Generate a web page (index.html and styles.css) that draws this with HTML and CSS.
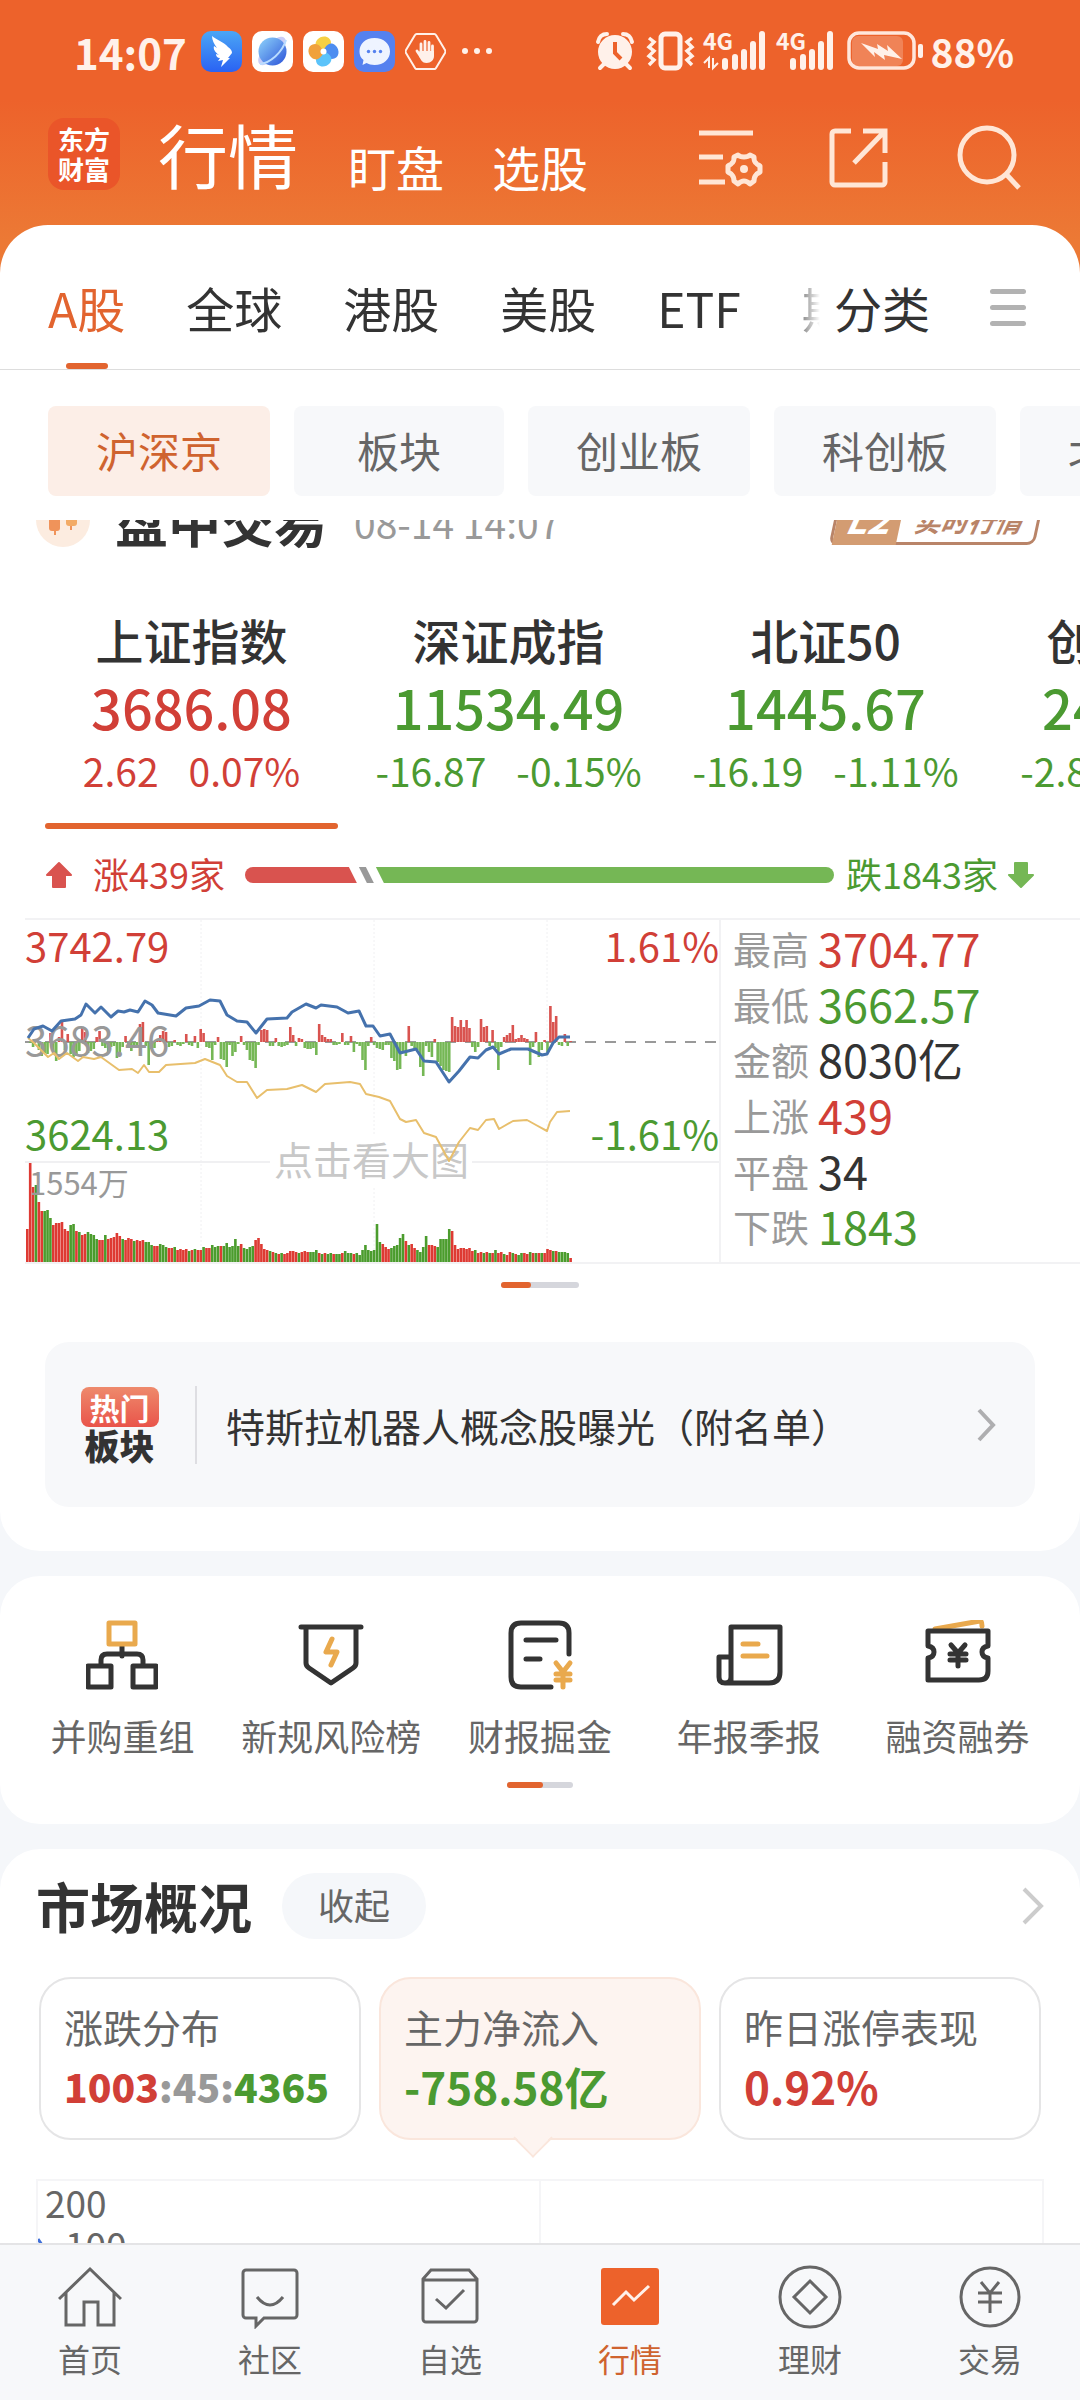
FILE: index.html
```html
<!DOCTYPE html>
<html lang="zh-CN">
<head>
    <meta charset="UTF-8">
    <meta name="viewport" content="width=device-width, initial-scale=1.0">
    <title>行情</title>
    <link rel="stylesheet" href="styles.css">
</head>
<body>
    <div class="app">
        <header class="header">
            <div class="status">
                <span class="time">14:07</span>
                <svg class="app-icon" viewBox="0 0 41 41">
                    <defs><linearGradient id="wing" x1="0" y1="0" x2="0" y2="1"><stop offset="0" stop-color="#4ba6f5"/><stop offset="1" stop-color="#2a62f3"/></linearGradient></defs>
                    <rect width="41" height="41" rx="10" fill="url(#wing)"/>
                    <path d="M11 5c5 4 12 6 16 11 3 2 4 4 4 6l-4 5h2l-9 9 2-7-5 1 2-3c-3 0-4-2-4-4l3 1c-4-3-6-6-5-9l3 2c-3-4-5-8-5-12z" fill="#fff"/>
                </svg>
                <svg class="app-icon" viewBox="0 0 41 41">
                    <defs><linearGradient id="planet" x1="0" y1="0" x2="1" y2="1"><stop offset="0" stop-color="#8fd4fb"/><stop offset="1" stop-color="#2b52d8"/></linearGradient></defs>
                    <rect width="41" height="41" rx="10" fill="#fff"/>
                    <ellipse cx="20" cy="20" rx="18" ry="8" transform="rotate(-46 20 20)" fill="#c9cdf7"/>
                    <circle cx="20.500" cy="20.500" r="14" fill="url(#planet)"/>
                    <path d="M8 33C18 32 30 22 34 9" fill="none" stroke="#b9dcff" stroke-width="2"/>
                </svg>
                <svg class="app-icon" viewBox="0 0 41 41">
                    <rect width="41" height="41" rx="10" fill="#fff"/>
                    <path d="M14 9c5-6 14-4 14 3 0 5-4 6-8 9-5-3-10-6-6-12z" fill="#f6d043"/>
                    <path d="M32 14c6 5 4 14-3 14-5 0-6-4-9-8 3-5 6-10 12-6z" fill="#4d8df0"/>
                    <path d="M27 32c-5 6-14 4-14-3 0-5 4-6 8-9 5 3 10 6 6 12z" fill="#5bc3fa"/>
                    <path d="M9 27c-6-5-4-14 3-14 5 0 6 4 9 8-3 5-6 10-12 6z" fill="#f0a13c"/>
                    <circle cx="20.500" cy="20.500" r="3" fill="#fff"/>
                </svg>
                <svg class="app-icon" viewBox="0 0 41 41">
                    <rect width="41" height="41" rx="10" fill="#5581ef"/>
                    <path d="M20.500 7C30 7 36 13 36 20.500S30 34 20.500 34c-3 0-6-1-8-2l-4 2 1-5c-3-2-4-5-4-8.500C5.500 13 11 7 20.500 7z" fill="#eef4ff"/>
                    <g fill="#5581ef"><circle cx="14.500" cy="20.500" r="1.700"/><circle cx="20.500" cy="20.500" r="1.700"/><circle cx="26.500" cy="20.500" r="1.700"/></g>
                </svg>
                <svg class="app-icon" viewBox="0 0 41 41">
                    <path d="M12 3h17a2 2 0 0 1 2 1l9 15a3 3 0 0 1 0 3l-9 15a2 2 0 0 1-2 1H12a2 2 0 0 1-2-1L1 22a3 3 0 0 1 0-3L10 4a2 2 0 0 1 2-1z" fill="none" stroke="#fff1ea" stroke-width="2"/>
                    <path d="M16 22V13M20 20V10.500M24 20V11.500M27.500 22V15M12 20l4 6" stroke="#fff1ea" stroke-width="2.800" stroke-linecap="round"/>
                    <path d="M14.500 20H29v5c0 4-3 7-7.500 7S16 29 14 25z" fill="#fff1ea"/>
                </svg>
                <svg class="dots" viewBox="0 0 30 8"><circle cx="3" cy="4" r="3"/><circle cx="15" cy="4" r="3"/><circle cx="27" cy="4" r="3"/></svg>

                <svg class="status-right" width="330" height="42" viewBox="0 0 330 42" fill="#fff1ea">
                    <!-- alarm -->
                    <circle cx="19" cy="22" r="17"/>
                    <path d="M2 12C3 7 6 4 11 4M36 12C35 7 32 4 27 4M8 34l-4 4M30 34l4 4" fill="none" stroke="#fff1ea" stroke-width="4" stroke-linecap="round"/>
                    <path d="M19 12v11l6 6" fill="none" stroke="#ed622b" stroke-width="4"/>
                    <!-- vibrate -->
                    <rect x="65" y="4" width="19" height="34" rx="4" fill="none" stroke="#fff1ea" stroke-width="5"/>
                    <path d="M53 8l5 4-5 5 5 4-5 5 5 4-5 5M96 8l-5 4 5 5-5 4 5 5-5 4 5 5" fill="none" stroke="#fff1ea" stroke-width="3.500"/>
                    <!-- signal -->
                    <text class="net" x="107" y="20">4G</text>
                    <path d="M108 33l5-5v10M122 33l-5 5V28" fill="none" stroke="#fff1ea" stroke-width="2"/>
                    <g id="sig"><rect x="126" y="28" width="6" height="12" rx="3"/><rect x="136" y="24" width="6" height="16" rx="3"/><rect x="145" y="19" width="6" height="21" rx="3"/><rect x="154" y="11" width="6" height="29" rx="3"/><rect x="163" y="1" width="6" height="39" rx="3"/></g>
                    <text class="net" x="180" y="20">4G</text>
                    <use href="#sig" x="68"/>
                    <!-- battery -->
                    <rect x="256" y="6" width="51" height="30" rx="6" fill="#f08357"/>
                    <rect x="253" y="3" width="65" height="35" rx="10" fill="none" stroke="#ffe7dc" stroke-width="3.500"/>
                    <rect x="322" y="14" width="5" height="14" rx="2"/>
                    <path d="M265 13l17 6-1-5 11 7-1-6 15 14-18-4 1 5-11-8 1 5z"/>
                </svg>
                <span class="percent">88%</span>
            </div>

            <div class="title-bar">
                <div class="logo"><span>东方</span><span>财富</span></div>
                <h1>行情</h1>
                <button class="head-tab">盯盘</button>
                <button class="head-tab">选股</button>
                <div class="tools">
                    <button class="tool" aria-label="设置">
                        <svg viewBox="0 0 64 64"><path d="M3 11h54M3 35h24M3 60h26"/><path d="M42 33c2 2 4 2 6 2s4 0 6-2l4 2c0 3 0 5 2 6 1 2 3 2 4 3v6c-1 1-3 1-4 3-2 2-2 4-2 6l-4 3c-2-2-4-3-6-3s-4 1-6 3l-4-3c0-2 0-4-2-6-1-2-3-2-4-3v-6c1-1 3-1 4-3 2-1 2-3 2-6z" stroke-linejoin="round"/><circle cx="48" cy="47" r="4" fill="#ffe6d6" stroke="none"/></svg>
                    </button>
                    <button class="tool" aria-label="分享">
                        <svg viewBox="0 0 64 64"><path d="M25 9H9a3 3 0 0 0-3 3v48a3 3 0 0 0 3 3h47a3 3 0 0 0 3-3V40M37 9h22v22M58 10L28 41"/></svg>
                    </button>
                    <button class="tool" aria-label="搜索">
                        <svg viewBox="0 0 64 64"><circle cx="31" cy="33" r="27"/><path d="M50 52l13 14"/></svg>
                    </button>
                </div>
            </div>
        </header>

        <div class="filters">
            <nav class="tabs">
                <div class="tab-list">
                    <button class="tab active">A股</button>
                    <button class="tab">全球</button>
                    <button class="tab">港股</button>
                    <button class="tab">美股</button>
                    <button class="tab">ETF</button>
                    <button class="tab">期货</button>
                </div>
                <button class="tab">分类</button>
                <button class="menu" aria-label="菜单"><i></i><i></i><i></i></button>
            </nav>
            <div class="chips">
                <button class="chip active">沪深京</button>
                <button class="chip">板块</button>
                <button class="chip">创业板</button>
                <button class="chip">科创板</button>
                <button class="chip">北交所</button>
            </div>
        </div>

        <main class="content">
            <section class="card quotes">
                <div class="session">
                    <svg class="session-icon" viewBox="0 0 54 54">
                        <circle cx="27" cy="27" r="27" fill="#fcece0"/>
                        <path d="M19 12v30M35 15v22" stroke="#f0935a" stroke-width="2"/>
                        <rect x="13" y="18" width="11" height="20" rx="3" fill="#f0935a"/><rect x="30" y="20" width="11" height="13" rx="3" fill="#f3ab66"/>
                    </svg>
                    <h2>盘中交易</h2>
                    <span class="date">08-14 14:07</span>
                    <span class="level"><b>L2</b><em>实时行情</em></span>
                </div>

                <div class="indexes">
                    <div class="index up active">
                        <h3>上证指数</h3>
                        <strong>3686.08</strong>
                        <p><span>2.62</span><span>0.07%</span></p>
                    </div>
                    <div class="index down">
                        <h3>深证成指</h3>
                        <strong>11534.49</strong>
                        <p><span>-16.87</span><span>-0.15%</span></p>
                    </div>
                    <div class="index down">
                        <h3>北证50</h3>
                        <strong>1445.67</strong>
                        <p><span>-16.19</span><span>-1.11%</span></p>
                    </div>
                    <div class="index down">
                        <h3>创业板指</h3>
                        <strong>2493.42</strong>
                        <p><span>-2.80</span><span>-0.11%</span></p>
                    </div>
                </div>

                <div class="breadth">
                    <svg class="arrow" viewBox="0 0 28 28"><path d="M14 2L26 14H20V26H8V14H2z" fill="#d9534f" stroke="#d9534f" stroke-width="2" stroke-linejoin="round"/></svg>
                    <span class="up">涨439家</span>
                    <div class="ratio">
                        <div class="ratio-up" style="width: 19%"></div>
                        <div class="ratio-flat"></div>
                        <div class="ratio-down"></div>
                    </div>
                    <span class="down">跌1843家</span>
                    <svg class="arrow" viewBox="0 0 28 28"><path d="M14 26L2 14H8V2H20V14H26z" fill="#75b755" stroke="#75b755" stroke-width="2" stroke-linejoin="round"/></svg>
                </div>

                <div class="market">
                    <svg class="chart" viewBox="0 0 694 342">
                        <g stroke="#f0f0f2" stroke-width="1">
                            <path d="M176 0v342M349 0v342M522 0v342" stroke-dasharray="2 2"/>
                            <path d="M0 242h694" stroke-width="2"/>
                        </g>
                        <path d="M0 122h694" stroke="#999" stroke-width="2" stroke-dasharray="11 9"/>
                        <rect x="245" y="215" width="202" height="52" fill="#fff"/>
                        <text class="hint" x="249" y="255">点击看大图</text>
                        <g id="flow"></g>
                        <g id="volume"></g>
                        <text class="axis red" x="0" y="42">3742.79</text>
                        <text class="axis gray" x="0" y="136">3683.46</text>
                        <text class="axis green" x="0" y="230">3624.13</text>
                        <text class="axis red" x="694" y="42" text-anchor="end">1.61%</text>
                        <text class="axis green" x="694" y="230" text-anchor="end">-1.61%</text>
                        <text class="vol gray" x="4" y="275">1554万</text>
                        <polyline fill="none" stroke="#e8bf6c" stroke-width="2" stroke-linejoin="round" points="3,118 9,123 18,132 23,137 29,133 34,139 42,133 53,141 58,137 69,139 76,137 94,150 107,149 113,153 119,145 124,152 134,152 141,145 170,143 180,139 195,145 202,156 212,162 222,162 232,178 242,170 262,169 277,165 291,172 300,164 325,162 335,164 341,174 354,177 365,181 375,199 381,202 391,200 399,213 411,217 424,241 434,222 445,208 453,210 461,200 469,199 474,209 488,201 502,200 511,205 522,211 525,202 532,192 545,191"/>
                        <polyline fill="none" stroke="#4572ad" stroke-width="3" stroke-linejoin="round" points="3,118 9,109 18,106 27,111 36,101 50,99 56,95 61,84 70,93 76,87 86,97 93,91 99,92 105,90 113,92 120,81 127,85 133,93 151,96 161,88 174,86 185,80 195,81 202,95 212,101 222,102 231,113 242,99 262,98 267,92 281,84 291,88 296,85 312,87 323,93 334,91 341,106 348,106 355,116 365,114 375,133 391,129 399,141 411,142 424,162 434,151 445,137 453,138 461,130 468,127 474,134 486,129 503,129 517,135 522,134 528,123 534,117 545,117"/>
                    </svg>
                    <dl class="stats">
                        <div><dt>最高</dt><dd class="up">3704.77</dd></div>
                        <div><dt>最低</dt><dd class="down">3662.57</dd></div>
                        <div><dt>金额</dt><dd>8030亿</dd></div>
                        <div><dt>上涨</dt><dd class="up">439</dd></div>
                        <div><dt>平盘</dt><dd>34</dd></div>
                        <div><dt>下跌</dt><dd class="down">1843</dd></div>
                    </dl>
                </div>
                <div class="pager wide"><i></i></div>

                <a class="hot" href="#">
                    <span class="hot-tag"><b>热门</b><strong>板块</strong></span>
                    <span class="hot-text">特斯拉机器人概念股曝光（附名单）</span>
                    <svg class="chevron" viewBox="0 0 22 38"><path d="M3 4l14 15L3 34" fill="none" stroke="#aeaeb0" stroke-width="4"/></svg>
                </a>
            </section>

            <section class="card shortcuts">
                <div class="shortcut-list">
                    <a class="shortcut" href="#">
                        <svg viewBox="0 0 72 72"><path d="M36 26v10M15 44v-4q0-6 6-6h30q6 0 6 6v4"/><rect x="2" y="46" width="23" height="21"/><rect x="47" y="46" width="23" height="21"/><rect class="gold" x="23" y="3" width="26" height="21"/></svg>
                        并购重组
                    </a>
                    <a class="shortcut" href="#">
                        <svg viewBox="0 0 72 72"><path d="M6 7h60M11 7v36q0 3 3 5l22 15 22-15q3-2 3-5V7"/><path class="gold" d="M37 19l-6 13h11l-6 13"/></svg>
                        新规风险榜
                    </a>
                    <a class="shortcut" href="#">
                        <svg viewBox="0 0 72 72"><path d="M65 34V13q0-10-10-10H17Q7 3 7 13v44q0 10 10 10h30M22 20h30M22 39h14"/><path class="gold" d="M52 43l7 9 7-9M59 52v15M52 54h14M52 60h14"/></svg>
                        财报掘金
                    </a>
                    <a class="shortcut" href="#">
                        <svg viewBox="0 0 72 72"><path d="M18 63V7h49v45q0 11-11 11H12q-6 0-6-6V37h12v20q0 6-6 6"/><path class="gold" d="M30 24h15M30 36h24"/></svg>
                        年报季报
                    </a>
                    <a class="shortcut" href="#">
                        <svg viewBox="0 0 72 72"><path class="gold" d="M13 9L58 1q2 0 2 5"/><path d="M6 11h60v15q-6 1-6 6t6 6v13q0 9-9 9H6V38q6-1 6-6t-6-6z"/><path d="M29 25l7 8 7-8M36 33v13M28 34h16M28 40h16"/></svg>
                        融资融券
                    </a>
                </div>
                <div class="pager"><i></i></div>
            </section>

            <section class="card overview">
                <div class="overview-head">
                    <h2>市场概况</h2>
                    <button class="fold">收起</button>
                    <svg class="chevron" viewBox="0 0 22 38"><path d="M2 2l17 17L2 36" fill="none" stroke="#ccc" stroke-width="4"/></svg>
                </div>
                <div class="boxes">
                    <button class="box">
                        <span>涨跌分布</span>
                        <strong class="small"><b class="up">1003</b><b class="flat">:45:</b><b class="down">4365</b></strong>
                    </button>
                    <button class="box active">
                        <span>主力净流入</span>
                        <strong class="down">-758.58亿</strong>
                    </button>
                    <button class="box">
                        <span>昨日涨停表现</span>
                        <strong class="up">0.92%</strong>
                    </button>
                </div>
                <div class="flow-chart">
                    <span>200</span>
                    <span class="second">100</span>
                    <svg class="flow-line" viewBox="0 0 12 20"><path d="M0 2l12 18" stroke="#3f6fd8" stroke-width="3"/></svg>
                </div>
            </section>
        </main>

        <nav class="bottom-nav">
            <a href="#"><svg viewBox="0 0 64 64"><path d="M1 34L32 4l31 30M8 28v32h18V37h14v23h16V28"/></svg>首页</a>
            <a href="#"><svg viewBox="0 0 64 64"><path d="M8 5h48a3 3 0 0 1 3 3v42a3 3 0 0 1-3 3H26l-8 8v-8H8a3 3 0 0 1-3-3V8a3 3 0 0 1 3-3zM19 32q13 16 26 0"/></svg>社区</a>
            <a href="#"><svg viewBox="0 0 64 64"><path d="M5 14L13 5h38l8 9v40a3 3 0 0 1-3 3H8a3 3 0 0 1-3-3zM5 15h54M18 34l10 9 18-18"/></svg>自选</a>
            <a class="active" href="#"><svg viewBox="0 0 64 64"><rect x="3" y="3" width="58" height="57" rx="3" fill="#ed622b" stroke="none"/><path d="M15 40l13-13 8 8 15-14" stroke="#fff1ea"/></svg>行情</a>
            <a href="#"><svg viewBox="0 0 64 64"><circle cx="32" cy="32" r="30"/><path d="M32 16l16 16-16 16-16-16z"/></svg>理财</a>
            <a href="#"><svg viewBox="0 0 64 64"><circle cx="32" cy="32" r="29"/><path d="M23 17l9 11 9-11M20 28h24M20 37h24M32 28v20"/></svg>交易</a>
        </nav>
    </div>

    <script>
        // one value per minute, above zero is red, below zero is green
        const flow = [0,-1,-5,1,-8,-14,-11,-12,9,-10,-19,5,20,-8,8,-12,-15,-14,-9,14,10,-11,-9,-7,5,11,-4,-6,-11,-5,-4,-16,-11,-5,6,-3,-9,-5,-4,18,20,-4,-23,-7,-6,3,7,11,10,-5,-4,2,-3,-4,-2,8,-3,-4,6,-6,13,9,-5,-6,-18,-3,5,-17,-18,-25,-3,-14,-10,-2,6,-3,-8,-18,-19,-26,-3,12,13,12,-4,-4,4,-4,-5,-4,-3,15,7,-4,4,3,-6,-7,-7,-6,-13,18,7,5,3,3,-3,-3,-2,9,-3,-3,6,-10,-2,-4,-18,-28,-4,5,-3,-6,-7,-8,-3,-3,-16,-19,-28,-27,-10,-14,16,-4,-6,-8,-25,-34,-4,-10,-15,3,-20,-24,-28,-29,-30,25,16,15,22,15,22,14,-5,-10,-5,23,15,16,-4,12,-6,-28,-5,5,7,9,17,3,4,7,4,3,-23,-5,10,-15,-8,2,-10,36,20,26,-3,-4,8,-4,1];
        const volume = [33,99,75,-77,60,51,-51,-52,-44,37,39,39,40,33,31,-37,-38,31,-30,27,28,-30,-28,-27,-23,22,22,-27,23,24,25,29,26,-23,22,24,23,-21,22,21,22,-20,-20,-17,16,16,-18,-17,-15,14,14,-15,12,13,12,13,-11,12,-13,12,12,-15,14,14,-17,-15,-16,16,-16,-19,-15,-16,-23,-16,18,-14,-13,-15,-16,22,24,18,13,12,-11,10,-9,8,-9,8,9,11,11,10,-9,10,11,10,-10,-10,-12,9,-8,9,-8,-9,8,-8,-8,9,-11,-9,-9,8,-9,-7,-12,-17,-12,-11,-12,-38,-20,18,15,13,-14,-16,-17,-24,-28,21,-17,18,14,-12,-10,-15,-26,17,17,16,-15,-23,-23,-23,-33,31,17,13,14,14,13,14,11,-12,9,10,-9,10,-9,9,-12,9,10,-8,7,10,-9,8,-7,-9,9,8,-10,9,-9,9,-9,9,13,12,-11,11,-10,-10,-10,-9,4];

        function drawBars(id, data, base, both, colors) {
            const group = document.getElementById(id);
            data.forEach((value, i) => {
                const bar = document.createElementNS('http://www.w3.org/2000/svg', 'rect');
                const height = Math.abs(value);
                bar.setAttribute('x', i * 2.89 + 1);
                bar.setAttribute('y', both && value < 0 ? base : base - height);
                bar.setAttribute('width', 2.6);
                bar.setAttribute('height', height);
                bar.setAttribute('fill', value < 0 ? colors[1] : colors[0]);
                group.appendChild(bar);
            });
        }

        drawBars('flow', flow, 122, true, ['#d9534f', '#75b755']);
        drawBars('volume', volume, 342, false, ['#de3a33', '#4b9c2d']);
    </script>
</body>
</html>
```

FILE: styles.css
```css
* {
    box-sizing: border-box;
}
body {
    margin: 0;
    font-family: "Noto Sans CJK SC", "Noto Sans", sans-serif;
    color: #333;
    background-color: #f5f7fa;
}
h1, h2, h3, p, dl, dd {
    margin: 0;
}
button {
    padding: 0;
    border: none;
    background: none;
    color: inherit;
    font: inherit;
    white-space: nowrap;
    cursor: pointer;
}
a {
    color: inherit;
    text-decoration: none;
}
svg {
    display: block;
    flex-shrink: 0;
}
.up, .red {
    color: #d13f37;
    fill: #d13f37;
}
.down, .green {
    color: #4b9a31;
    fill: #4b9a31;
}
.flat, .gray {
    color: #999;
    fill: #999;
}
.app {
    display: flex;
    flex-direction: column;
    height: 100vh;
    overflow: hidden;
}

/* header */
.header {
    padding-bottom: 68px;
    margin-bottom: -48px;
    background: linear-gradient(#ed622b 100px, #ec7935 240px);
}
.status {
    display: flex;
    align-items: center;
    gap: 10px;
    height: 102px;
    padding: 0 66px 0 74px;
    color: #fff1ea;
    font-weight: 700;
}
.time {
    margin-right: 4px;
    font-size: 42px;
}
.app-icon {
    width: 41px;
    height: 41px;
}
.dots {
    width: 30px;
    margin-left: 6px;
    fill: #fff1ea;
}
.status-right {
    margin-left: auto;
    overflow: visible;
}
.net {
    font-size: 23px;
    font-weight: 700;
}
.percent {
    margin-left: -6px;
    font-size: 39px;
}
.title-bar {
    display: flex;
    align-items: center;
    height: 103px;
    padding: 0 60px 0 48px;
    color: #fff;
}
.logo {
    display: flex;
    flex-direction: column;
    justify-content: center;
    width: 72px;
    height: 72px;
    border-radius: 16px;
    background-color: #ea5529;
    text-align: center;
    font-size: 26px;
    font-weight: 700;
    line-height: 30px;
}
h1 {
    margin-left: 38px;
    font-size: 70px;
    font-weight: 400;
    line-height: 88px;
}
.head-tab {
    align-self: flex-end;
    margin-left: 50px;
    font-size: 48px;
    line-height: 78px;
}
.head-tab + .head-tab {
    margin-left: 48px;
}
.tools {
    display: flex;
    gap: 66px;
    margin-left: auto;
}
.tool svg {
    width: 64px;
    height: 64px;
    overflow: visible;
    fill: none;
    stroke: #ffe6d6;
    stroke-width: 5;
}

/* tabs and chips */
.filters {
    border-radius: 48px 48px 0 0;
    background-color: #fff;
}
.tabs {
    display: flex;
    align-items: center;
    height: 145px;
    padding: 20px 54px 0 48px;
    border-bottom: 1px solid #ddd;
    font-size: 48px;
}
.tab-list {
    display: flex;
    flex: 1;
    gap: 61px;
    margin-right: 14px;
    overflow: hidden;
    -webkit-mask-image: linear-gradient(90deg, #000 96%, transparent);
    mask-image: linear-gradient(90deg, #000 96%, transparent);
}
.tab {
    position: relative;
    height: 124px;
}
.tab.active {
    color: #e2642f;
}
.tab.active::after {
    content: "";
    position: absolute;
    left: 50%;
    bottom: 0;
    width: 42px;
    height: 6px;
    margin-left: -21px;
    border-radius: 3px;
    background-color: #e2642f;
}
.menu {
    display: flex;
    flex-direction: column;
    gap: 11px;
    margin-left: 60px;
}
.menu i {
    width: 36px;
    height: 5px;
    border-radius: 3px;
    background-color: #b2b2b2;
}
.chips {
    display: flex;
    gap: 24px;
    padding: 36px 0 24px 48px;
    overflow: hidden;
}
.chip {
    flex-shrink: 0;
    min-width: 210px;
    height: 90px;
    padding: 0 48px 4px;
    border-radius: 8px;
    background-color: #f7f8fa;
    color: #666;
    font-size: 42px;
}
.chip.active {
    background-color: #fceee7;
    color: #cf632f;
}

/* scrolling content */
.content {
    display: flex;
    flex: 1;
    flex-direction: column;
    gap: 25px;
    min-height: 0;
    overflow: hidden;
}
.card {
    flex-shrink: 0;
    border-radius: 40px;
    background-color: #fff;
}
.quotes {
    padding-bottom: 44px;
    border-radius: 0 0 40px 40px;
}
.session {
    display: flex;
    align-items: center;
    height: 54px;
    margin-top: -27px;
    padding: 0 40px 0 36px;
}
.session-icon {
    width: 54px;
}
.session h2 {
    margin-left: 25px;
    font-size: 53px;
    line-height: 54px;
}
.date {
    margin-left: 27px;
    padding-top: 4px;
    color: #999;
    font-size: 39px;
}
.level {
    display: flex;
    align-items: center;
    height: 50px;
    margin-left: auto;
    border: 3px solid #b98468;
    border-radius: 8px;
    color: #b98468;
    font-style: italic;
    transform: skewX(-12deg);
}
.level b {
    width: 64px;
    height: 50px;
    background-color: #d39c72;
    color: #fff;
    font-size: 38px;
    line-height: 46px;
    text-align: center;
}
.level em {
    padding: 0 14px;
    font-size: 27px;
    font-weight: 700;
}
.indexes {
    display: flex;
    gap: 24px;
    margin-top: 62px;
    padding-left: 45px;
    overflow: hidden;
}
.index {
    display: flex;
    flex: 0 0 293px;
    flex-direction: column;
    align-items: center;
    height: 220px;
    border-bottom: 6px solid transparent;
}
.index.active {
    position: relative;
}
.index.active::after {
    content: "";
    position: absolute;
    left: 0;
    right: 0;
    bottom: -6px;
    height: 6px;
    border-radius: 3px;
    background-color: #e2642f;
}
.index h3 {
    color: #333;
    font-size: 48px;
    font-weight: 500;
    line-height: 60px;
}
.index strong {
    font-size: 54px;
    font-weight: 500;
    line-height: 76px;
}
.index p {
    display: flex;
    gap: 30px;
    font-size: 39px;
    line-height: 50px;
    white-space: nowrap;
}
.breadth {
    display: flex;
    align-items: center;
    height: 40px;
    margin: 26px 45px 23px;
    font-size: 36px;
}
.breadth span {
    padding-bottom: 4px;
}
.arrow {
    width: 28px;
    height: 28px;
}
.breadth .up {
    margin: 0 20px;
}
.breadth .down {
    margin: 0 9px 0 12px;
}
.ratio {
    display: flex;
    flex: 1;
    gap: 2px;
    height: 16px;
}
.ratio-up {
    border-radius: 8px 0 0 8px;
    background-color: #d9534f;
    clip-path: polygon(0 0, calc(100% - 8px) 0, 100% 100%, 0 100%);
}
.ratio-flat {
    width: 15px;
    background-color: #999;
    clip-path: polygon(0 0, 7px 0, 100% 100%, 8px 100%);
}
.ratio-down {
    flex: 1;
    border-radius: 0 8px 8px 0;
    background-color: #75b755;
    clip-path: polygon(0 0, 100% 0, 100% 100%, 8px 100%);
}
.market {
    display: flex;
    margin-left: 25px;
    border-top: 2px solid #f2f2f4;
    border-bottom: 2px solid #f2f2f4;
}
.chart {
    flex: 1;
    min-width: 0;
}
.axis {
    font-size: 40px;
}
.vol {
    font-size: 31px;
}
.hint {
    fill: #c8c8c8;
    font-size: 39px;
}
.stats {
    display: flex;
    flex-direction: column;
    width: 361px;
    padding: 0 0 8px 12px;
    border-left: 2px solid #f2f2f4;
}
.stats div {
    display: flex;
    flex: 1;
    align-items: center;
    gap: 9px;
    line-height: 54px;
}
.stats dt {
    color: #999;
    font-size: 38px;
}
.stats dd {
    font-size: 45px;
}
.pager {
    width: 66px;
    height: 6px;
    margin: 0 auto;
    border-radius: 3px;
    background-color: #d5d6dc;
}
.pager.wide {
    width: 78px;
    margin-top: 18px;
}
.pager i {
    display: block;
    width: 36px;
    height: 6px;
    border-radius: 3px;
    background-color: #e2642f;
}
.pager.wide i {
    width: 30px;
}
.hot {
    display: flex;
    align-items: center;
    height: 165px;
    margin: 54px 45px 0;
    padding: 0 37px 0 35px;
    border-radius: 24px;
    background-color: #f7f8fa;
}
.hot-tag {
    display: flex;
    flex-direction: column;
    align-items: center;
    width: 79px;
    font-weight: 900;
}
.hot-tag b {
    width: 78px;
    border-radius: 8px;
    background: linear-gradient(#ee8a6c, #e9544a);
    color: #fff;
    font-size: 30px;
    font-weight: 700;
    line-height: 40px;
    text-align: center;
}
.hot-tag strong {
    font-size: 35px;
    line-height: 36px;
}
.hot-text {
    margin-left: 36px;
    padding-left: 29px;
    border-left: 2px solid #dedee2;
    font-size: 39px;
    line-height: 78px;
}
.chevron {
    width: 22px;
    height: 38px;
    margin-left: auto;
}

/* shortcuts */
.shortcuts {
    padding: 44px 18px 36px;
}
.shortcut-list {
    display: flex;
}
.shortcut {
    display: flex;
    flex: 1;
    flex-direction: column;
    align-items: center;
    gap: 16px;
    color: #666;
    font-size: 36px;
    line-height: 54px;
    white-space: nowrap;
}
.shortcut svg {
    width: 72px;
    height: 72px;
    fill: none;
    stroke: #333;
    stroke-width: 5;
    stroke-linecap: round;
    stroke-linejoin: round;
}
.shortcut .gold {
    stroke: #e9a94d;
}
.shortcuts .pager {
    margin-top: 20px;
}

/* overview */
.overview {
    padding: 24px 36px 0;
}
.overview-head {
    display: flex;
    align-items: center;
    height: 66px;
}
.overview-head h2 {
    font-size: 54px;
    line-height: 66px;
}
.fold {
    width: 144px;
    height: 66px;
    margin-left: 30px;
    padding-bottom: 4px;
    border-radius: 33px;
    background-color: #f5f7fa;
    color: #666;
    font-size: 36px;
}
.boxes {
    display: flex;
    gap: 18px;
    margin: 38px 3px 39px;
}
.box {
    position: relative;
    display: flex;
    flex: 1;
    flex-direction: column;
    justify-content: center;
    height: 163px;
    padding: 0 0 6px 23px;
    border: 2px solid #e5e5e6;
    border-radius: 32px;
    text-align: left;
}
.box span {
    color: #666;
    font-size: 39px;
    line-height: 60px;
}
.box strong {
    font-size: 44px;
    line-height: 60px;
}
.box .small {
    font-size: 39px;
}
.box.active {
    border-color: #fae6dc;
    background-color: #fdf4f0;
}
.box.active::after {
    content: "";
    position: absolute;
    left: 50%;
    bottom: -14px;
    width: 26px;
    height: 26px;
    margin-left: -21px;
    border: solid #fae6dc;
    border-width: 0 2px 2px 0;
    background: linear-gradient(135deg, transparent 50%, #fdf4f0 50%);
    transform: rotate(45deg);
}
.flow-chart {
    position: relative;
    display: flex;
    flex-direction: column;
    height: 240px;
    padding-left: 7px;
    border: 2px solid #f5f5f7;
    background: linear-gradient(#f5f5f7, #f5f5f7) center / 2px 100% no-repeat;
    color: #666;
    font-size: 37px;
    line-height: 42px;
}
.flow-chart .second {
    padding-left: 20px;
}
.flow-line {
    position: absolute;
    left: 0;
    top: 56px;
    width: 12px;
}

/* bottom navigation */
.bottom-nav {
    display: flex;
    height: 157px;
    padding-top: 20px;
    border-top: 2px solid #e4e4e6;
    background-color: #f7f8fa;
    color: #666;
    font-size: 32px;
    line-height: 50px;
}
.bottom-nav a {
    display: flex;
    flex: 1;
    flex-direction: column;
    align-items: center;
    gap: 4px;
}
.bottom-nav svg {
    width: 64px;
    height: 64px;
    fill: none;
    stroke: #666;
    stroke-width: 3;
}
.bottom-nav .active {
    color: #cf632f;
}
```
